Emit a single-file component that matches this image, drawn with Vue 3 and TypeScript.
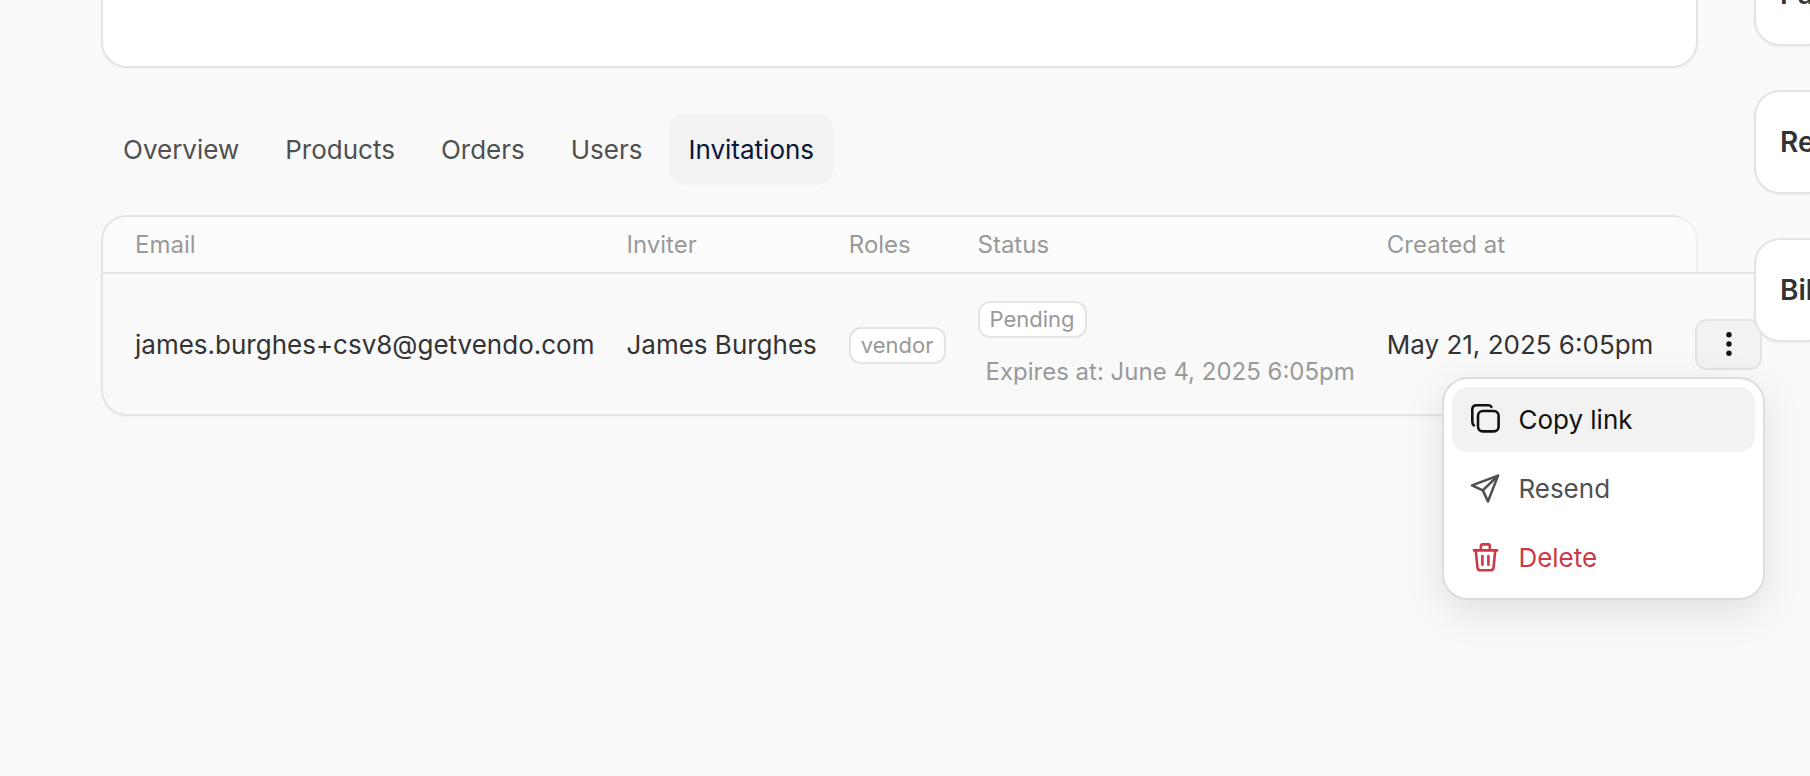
<script setup lang="ts">
import { ref } from 'vue'

interface Invitation {
  email: string
  inviter: string
  role: string
  status: string
  expires: string
  created: string
}

const tabs: string[] = ['Overview', 'Products', 'Orders', 'Users', 'Invitations']
const activeTab = ref('Invitations')
const columns: string[] = ['Email', 'Inviter', 'Roles', 'Status', 'Created at']
const invitations: Invitation[] = [
  {
    email: 'james.burghes+csv8@getvendo.com',
    inviter: 'James Burghes',
    role: 'vendor',
    status: 'Pending',
    expires: 'Expires at: June 4, 2025 6:05pm',
    created: 'May 21, 2025 6:05pm',
  },
]
const panels: string[] = ['Pa', 'Re', 'Bil']
const menuOpen = ref(true)
</script>

<template>
  <div class="page">
    <main class="main">
      <section class="card"></section>

      <nav class="tabs">
        <a
          v-for="tab in tabs"
          :key="tab"
          href="#"
          class="tab"
          :class="{ active: tab === activeTab }"
          @click.prevent="activeTab = tab"
        >{{ tab }}</a>
      </nav>

      <div class="table-card">
        <table class="table">
          <thead>
            <tr>
              <th v-for="column in columns" :key="column" scope="col">{{ column }}</th>
              <td class="actions"></td>
            </tr>
          </thead>
          <tbody>
            <tr v-for="item in invitations" :key="item.email">
              <td>{{ item.email }}</td>
              <td>{{ item.inviter }}</td>
              <td><span class="badge">{{ item.role }}</span></td>
              <td>
                <div class="status">
                  <span class="badge">{{ item.status }}</span>
                  <span class="expires">{{ item.expires }}</span>
                </div>
              </td>
              <td>{{ item.created }}</td>
              <td class="actions">
                <div class="dropdown">
                  <button
                    type="button"
                    class="more"
                    aria-label="Actions"
                    :aria-expanded="menuOpen"
                    @click="menuOpen = !menuOpen"
                  >
                    <svg width="24" height="24" viewBox="0 0 24 24" fill="currentColor" aria-hidden="true">
                      <circle cx="12" cy="2.8" r="2.7" />
                      <circle cx="12" cy="12" r="2.7" />
                      <circle cx="12" cy="21.2" r="2.7" />
                    </svg>
                  </button>
                  <div v-if="menuOpen" class="menu" role="menu">
                    <button type="button" role="menuitem" class="item current">
                      <svg class="icon" viewBox="0 0 31 31" aria-hidden="true">
                        <rect x="8" y="7" width="20.6" height="20.4" rx="4.8" />
                        <path d="M21.4 2.9C20.9 1.6 20 1.2 18.5 1.2H6.6C3.8 1.2 2.3 2.7 2.3 5.5V17.6C2.3 19.6 2.7 20.7 3.9 21.3" />
                      </svg>
                      Copy link
                    </button>
                    <button type="button" role="menuitem" class="item">
                      <svg class="icon" viewBox="0 0 31 31" aria-hidden="true">
                        <path d="M28 2.6L2 12.4L12.8 17.4L18 28.4Z" />
                        <path d="M12.8 17.4L28 2.6" />
                      </svg>
                      Resend
                    </button>
                    <button type="button" role="menuitem" class="item danger">
                      <svg class="icon" viewBox="0 0 31 31" aria-hidden="true">
                        <path d="M4 8.4H27" />
                        <path d="M10.9 8V4.2C10.9 3 11.6 2.4 12.7 2.4H18C19.1 2.4 19.8 3 19.8 4.2V8" />
                        <path d="M5.8 8.8L7.4 25.2C7.7 27.4 8.7 28.3 10.7 28.3H20.3C22.3 28.3 23.3 27.4 23.6 25.2L25.2 8.8" />
                        <path d="M12.4 14V22.8M18.4 14V22.8" />
                      </svg>
                      Delete
                    </button>
                  </div>
                </div>
              </td>
            </tr>
          </tbody>
        </table>
      </div>
    </main>

    <aside class="side">
      <section v-for="panel in panels" :key="panel" class="panel">
        <h2>{{ panel }}</h2>
      </section>
    </aside>
  </div>
</template>

<style>
body {
  background: #f9f9f9;
}
</style>

<style scoped>
.page {
  display: flex;
  gap: 56px;
  min-height: 100vh;
  padding-left: 101px;
  box-sizing: border-box;
  overflow: hidden;
  background: #f9f9f9;
  color: #333;
  font-family: Inter, "Liberation Sans", sans-serif;
  font-size: 26px;
  line-height: 39px;
  font-optical-sizing: none;
}

.main {
  flex: 1;
  min-width: 0;
}

.card {
  height: 66px;
  border: 2px solid #e4e4e4;
  border-top: 0;
  border-radius: 0 0 26px 26px;
  background: #fff;
  box-shadow: 0 1px 2px rgba(0, 0, 0, 0.04);
}

.tabs {
  display: flex;
  gap: 8px;
  margin: 46px 0 30px;
  padding-left: 3px;
}

.tab {
  padding: 16px 19px;
  border-radius: 16px;
  color: #505050;
  text-decoration: none;
}

.tab.active {
  background: #f2f2f2;
  color: #07163a;
}

.table-card {
  border: 2px solid #e4e4e4;
  border-radius: 26px;
  background: linear-gradient(#fcfcfc, #fcfcfc) 0 0 / 100% 56px no-repeat;
  box-shadow: 0 1px 2px rgba(0, 0, 0, 0.04);
}

.table {
  border-collapse: separate;
  border-spacing: 0;
  white-space: nowrap;
}

th,
td {
  padding: 0 16px;
  text-align: left;
  vertical-align: middle;
}

th:first-child,
td:first-child {
  padding-left: 32px;
}

thead th,
thead td {
  height: 55px;
  border-bottom: 2px solid #e4e4e4;
  color: #999;
  font-size: 24px;
  font-weight: 400;
  line-height: 36px;
}

thead .actions {
  background: rgba(251, 251, 251, 0.5);
  background-clip: padding-box;
}

tbody td {
  height: 140px;
}

tbody .actions {
  background: #f9f9f9;
}

.table .actions {
  padding: 0 16px 0 26px;
}

.badge {
  display: inline-block;
  padding: 0 10px;
  border: 2px solid #e4e4e4;
  border-radius: 12px;
  background: #fff;
  color: #999;
  font-size: 22px;
  line-height: 33px;
  vertical-align: middle;
}

.status {
  display: flex;
  flex-direction: column;
  align-items: flex-start;
  gap: 16px;
  padding-top: 3px;
}

.expires {
  padding-left: 8px;
  color: #999;
  font-size: 24px;
  line-height: 36px;
}

.dropdown {
  position: relative;
}

.more {
  display: flex;
  align-items: center;
  justify-content: center;
  width: 67px;
  height: 51px;
  padding: 0;
  border: 2px solid #e4e4e4;
  border-radius: 12px;
  background: #f2f2f2;
  color: #111;
}

.menu {
  position: absolute;
  z-index: 3;
  top: 58px;
  right: -3px;
  display: flex;
  flex-direction: column;
  gap: 4px;
  width: 323px;
  box-sizing: border-box;
  padding: 8px;
  border: 2px solid #d9dee4;
  border-radius: 26px;
  background: #fff;
  box-shadow: 0 12px 40px rgba(0, 0, 0, 0.1);
}

.item {
  display: flex;
  align-items: center;
  gap: 17px;
  padding: 13px 18px;
  border: 0;
  border-radius: 16px;
  background: none;
  color: #505050;
  font: inherit;
  text-align: left;
}

.item.current {
  background: #f2f2f2;
  color: #111;
}

.item.danger {
  color: #cb3a45;
}

.icon {
  width: 31px;
  height: 31px;
  overflow: visible;
  fill: none;
  stroke: currentColor;
  stroke-width: 2.6;
  stroke-linecap: round;
  stroke-linejoin: round;
}

.side {
  position: relative;
  z-index: 2;
  display: flex;
  flex: 0 0 56px;
  flex-direction: column;
  gap: 44px;
  min-width: 0;
  margin-top: -58px;
}

.panel {
  padding: 29px 0 29px 24px;
  border: 2px solid #e4e4e4;
  border-right: 0;
  border-radius: 26px 0 0 26px;
  background: #fff;
  box-shadow: 0 1px 2px rgba(0, 0, 0, 0.04);
}

.panel h2 {
  margin: 0;
  font-size: 28px;
  font-weight: 600;
  line-height: 42px;
  white-space: nowrap;
}
</style>
